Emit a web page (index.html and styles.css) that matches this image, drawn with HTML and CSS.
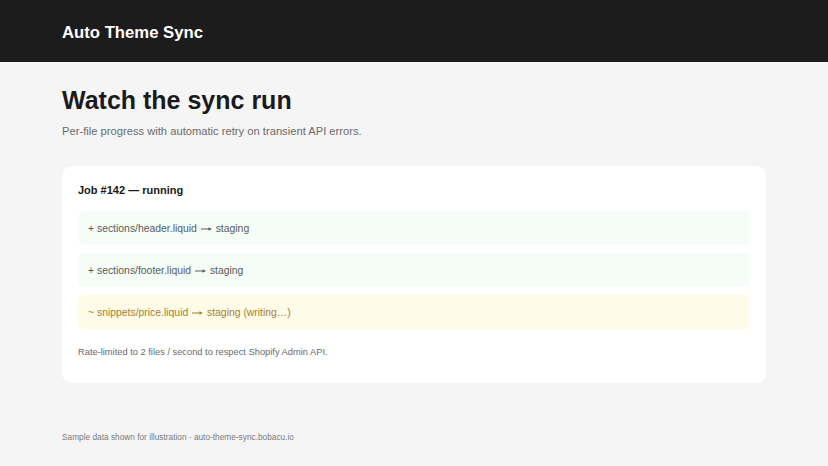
FILE: index.html
```html
<!DOCTYPE html>
<html lang="en">
<head>
    <meta charset="UTF-8">
    <meta name="viewport" content="width=device-width, initial-scale=1.0">
    <title>Auto Theme Sync</title>
    <link rel="stylesheet" href="styles.css">
</head>
<body>
    <header class="topbar">
        <div class="topbar-title">Auto Theme Sync</div>
    </header>

    <main class="page">
        <h1 class="page-title">Watch the sync run</h1>
        <p class="page-lead">Per-file progress with automatic retry on transient API errors.</p>

        <section class="job-card">
            <div class="job-title">Job #142 — running</div>
            <div class="job-rows">
                <div class="job-row done">+ sections/header.liquid <svg class="arrow" width="11" height="6" viewBox="0 0 11 6"><line x1="0" y1="3" x2="8" y2="3" stroke="currentColor" stroke-width="1"></line><polygon points="7.5,1.2 11,3 7.5,4.8" fill="currentColor"></polygon></svg> staging</div>
                <div class="job-row done">+ sections/footer.liquid <svg class="arrow" width="11" height="6" viewBox="0 0 11 6"><line x1="0" y1="3" x2="8" y2="3" stroke="currentColor" stroke-width="1"></line><polygon points="7.5,1.2 11,3 7.5,4.8" fill="currentColor"></polygon></svg> staging</div>
                <div class="job-row active">~ snippets/price.liquid <svg class="arrow" width="11" height="6" viewBox="0 0 11 6"><line x1="0" y1="3" x2="8" y2="3" stroke="currentColor" stroke-width="1"></line><polygon points="7.5,1.2 11,3 7.5,4.8" fill="currentColor"></polygon></svg> staging (writing…)</div>
            </div>
            <p class="job-note">Rate-limited to 2 files / second to respect Shopify Admin API.</p>
        </section>

        <footer class="page-foot">Sample data shown for illustration · auto-theme-sync.bobacu.io</footer>
    </main>
</body>
</html>
```

FILE: styles.css
```css
* {
    margin: 0;
    padding: 0;
    box-sizing: border-box;
}

body {
    font-family: 'Liberation Sans', Arial, sans-serif;
    background: #f5f5f5;
    color: #1a1a1a;
}

.topbar {
    background: #1c1c1c;
    height: 62px;
    padding: 4px 62px 0;
    display: flex;
    align-items: center;
}

.topbar-title {
    color: white;
    font-size: 16.7px;
    font-weight: bold;
}

.page {
    padding: 23px 62px 0;
}

.page-title {
    font-size: 25px;
    font-weight: bold;
    line-height: 30px;
    color: #1a1a1a;
}

.page-lead {
    margin-top: 10px;
    font-size: 11.2px;
    line-height: 13px;
    color: #6b6b6b;
}

.job-card {
    margin-top: 28px;
    background: white;
    border-radius: 10px;
    padding: 16px;
    height: 217px;
}

.job-title {
    font-size: 11px;
    font-weight: bold;
    line-height: 16px;
    color: #1a1a1a;
}

.job-rows {
    margin-top: 13px;
    display: flex;
    flex-direction: column;
    gap: 8px;
}

.job-row {
    height: 34px;
    padding: 0 10px;
    display: flex;
    align-items: center;
    border-radius: 6px;
    font-size: 10.4px;
    white-space: pre;
}

.arrow {
    margin: 1px 1px 0;
}

.job-row.done {
    background: #f6fdf9;
    color: #5a5a5a;
}

.job-row.active {
    background: #fefbe8;
    color: #a87f2e;
}

.job-note {
    margin-top: 18px;
    font-size: 9.3px;
    line-height: 11px;
    color: #6b6b6b;
}

.page-foot {
    margin-top: 49px;
    font-size: 8.3px;
    line-height: 10px;
    color: #7a7a7a;
}
```
